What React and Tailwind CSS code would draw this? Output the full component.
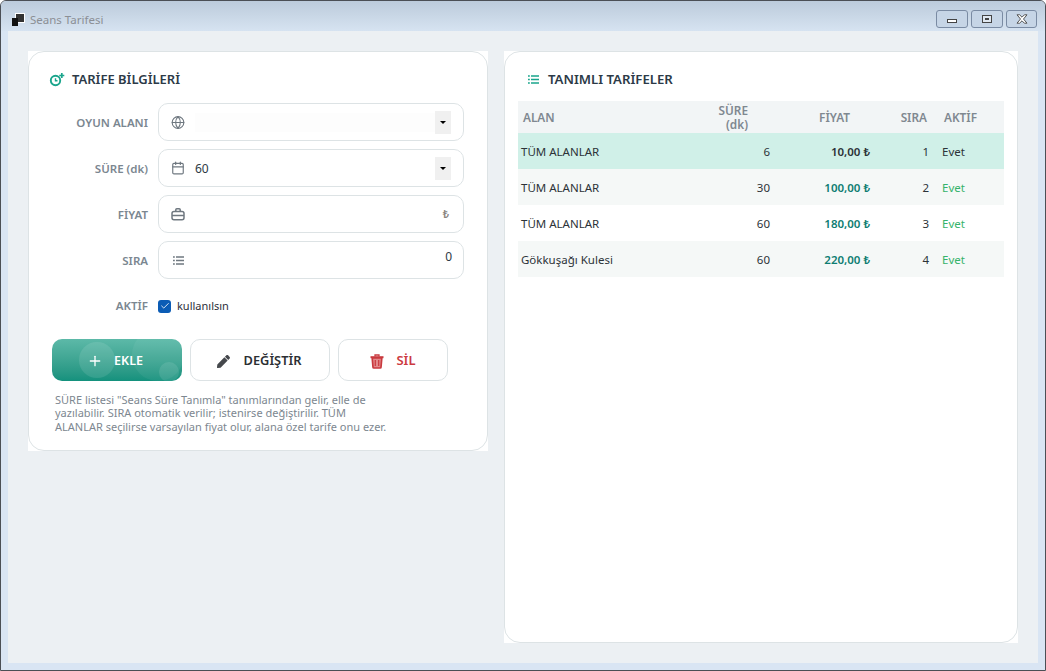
import { Calendar, Check, Globe, Plus } from 'lucide-react';
import { FaPen } from 'react-icons/fa';

const rows = [
  { area: 'TÜM ALANLAR', mins: '6', price: '10,00 ₺', order: '1', selected: true },
  { area: 'TÜM ALANLAR', mins: '30', price: '100,00 ₺', order: '2', alt: true },
  { area: 'TÜM ALANLAR', mins: '60', price: '180,00 ₺', order: '3' },
  { area: 'Gökkuşağı Kulesi', mins: '60', price: '220,00 ₺', order: '4', alt: true },
];

function ComboArrow() {
  return (
    <span className="flex h-[23px] w-4 shrink-0 items-center justify-center bg-[#f0f0f0]">
      <span className="h-0 w-0 border-x-[3px] border-t-[3px] border-x-transparent border-t-black" />
    </span>
  );
}

function Field({ label, icon, children }) {
  return (
    <div className="flex h-[38px] items-center">
      <span className="mt-[1px] w-[109px] text-right text-[11.5px] font-semibold text-[#7b8791]">{label}</span>
      <div className="ml-[10px] flex h-[38px] w-[306px] items-center rounded-[10px] border border-[#dde3e5] bg-white pl-[12px] pr-3 text-[12px] text-[#2d3a45]">
        <span className="flex w-[14px] shrink-0 justify-center text-[#6f7880]">{icon}</span>
        {children}
      </div>
    </div>
  );
}

function CaseIcon() {
  return (
    <svg width="14" height="14" viewBox="0 0 14 14" fill="none" stroke="currentColor" strokeWidth="1.5">
      <rect x="1" y="4.4" width="12" height="8.3" rx="2" />
      <path d="M1 8.4h12" />
      <path d="M4.8 4V2.8c0-.6.4-1 1-1h2.400c.6 0 1 .4 1 1V4" />
    </svg>
  );
}

function TimerPlusIcon() {
  return (
    <svg width="16" height="15" viewBox="0 0 16 15" fill="none" stroke="#1aa58c" strokeWidth="1.9">
      <circle cx="6.5" cy="8.5" r="4.7" />
      <path d="M6.5 6.200v2.500h2" strokeWidth="1.4" />
      <path d="M12.800 1v5M10.300 3.500h5" strokeWidth="1.700" />
    </svg>
  );
}

function RowsIcon({ className }) {
  return (
    <svg width="11" height="9" viewBox="0 0 11 9" fill="none" stroke="currentColor" strokeWidth="1.500" className={className}>
      <path d="M0 1h1.800M3 1h8M0 4.500h1.800M3 4.500h8M0 8h1.800M3 8h8" />
    </svg>
  );
}

function TrashIcon() {
  return (
    <svg width="14" height="15" viewBox="0 0 14 15" fill="none" stroke="#c93a3f" strokeWidth="1.700">
      <path d="M0.500 3.200h13" strokeWidth="2" />
      <path d="M5 2.500V1h4v1.500" strokeWidth="1.300" />
      <path d="M2.200 4l.8 9.200c0 .5.400.8.900.8h6.200c.5 0 .9-.3.900-.8l.8-9.200z" fill="#e38a8c" />
      <path d="M5.300 6v6M8.700 6v6" strokeWidth="1.200" />
    </svg>
  );
}

export default function App() {
  return (
    <div className="flex h-[671px] w-[1046px] flex-col overflow-hidden rounded-t-[6px] border border-[#4b4f55] bg-[#d9e5f3] font-['Noto_Sans',sans-serif]">
      <div className="flex h-[30px] shrink-0 items-start justify-between bg-gradient-to-b from-[#bccbdb] to-[#d6e3f1] pl-[11px] pr-[8px]">
        <div className="flex items-center pt-[11px]">
          <span className="relative mr-[6px] h-3 w-3">
            <span className="absolute right-0 top-0 h-2 w-2 bg-[#333] outline outline-1 outline-white" />
            <span className="absolute bottom-0 left-0 h-2 w-[6px] bg-[#111]" />
          </span>
          <span className="text-[11.5px] leading-[15px] text-[#8b8f95]">Seans Tarifesi</span>
        </div>
        <div className="flex gap-[3px] pt-[9px]">
          <div className="flex h-[18px] w-[32px] items-center justify-center rounded-[3px] border border-[#7a8ba3] bg-[#c6d5e6]">
            <span className="mt-[3px] h-[4px] w-[10px] border border-[#444] bg-white" />
          </div>
          <div className="flex h-[18px] w-[32px] items-center justify-center rounded-[3px] border border-[#7a8ba3] bg-[#c6d5e6]">
            <span className="flex h-[8px] w-[10px] items-center justify-center border border-[#444] bg-[#dfe7f0]">
              <span className="h-[2px] w-[4px] border border-[#444]" />
            </span>
          </div>
          <div className="flex h-[18px] w-[31px] items-center justify-center rounded-[3px] border border-[#7a8ba3] bg-[#c6d5e6]">
            <svg width="12" height="10" viewBox="0 0 12 10" fill="#fff" stroke="#444" strokeWidth="0.9">
              <path d="M1 .8h2.600L6 3.200 8.400.8H11L7.500 5 11 9.200H8.400L6 6.800 3.600 9.200H1L4.500 5z" />
            </svg>
          </div>
        </div>
      </div>

      <div className="mx-[7px] mb-[7px] flex flex-1 items-start gap-4 bg-[#ecf0f3] pl-5 pr-5 pt-5">
        <div className="h-[400px] w-[460px] shrink-0 bg-white">
          <div className="h-full rounded-[16px] border border-[#dde3e5] px-[23px] pt-[17px]">
            <div className="flex h-[20px] items-center gap-[7px] text-[13px] font-semibold text-[#2c3a47]">
              <span className="-ml-[3px]">
                <TimerPlusIcon />
              </span>
              <span className="leading-[20px]">TARİFE BİLGİLERİ</span>
            </div>

            <div className="mt-[14px] -ml-[13px] flex flex-col gap-2">
              <Field label="OYUN ALANI" icon={<Globe size={15} strokeWidth={1.9} />}>
                <span className="ml-[10px] h-[19px] flex-1 bg-[#fdfdfd]" />
                <ComboArrow />
              </Field>
              <Field label="SÜRE (dk)" icon={<Calendar size={14} strokeWidth={2} />}>
                <span className="ml-[10px] mt-[1px] flex-1">60</span>
                <ComboArrow />
              </Field>
              <Field label="FİYAT" icon={<CaseIcon />}>
                <span className="flex-1" />
                <span className="mr-[2px] text-[11px] font-semibold text-[#8a8580]">₺</span>
              </Field>
              <Field label="SIRA" icon={<RowsIcon />}>
                <span className="-mt-[6px] -mr-[1px] flex-1 text-right">0</span>
              </Field>
              <div className="mt-[9px] flex h-[20px] items-center">
                <span className="w-[109px] text-right text-[11.5px] font-semibold text-[#7b8791]">AKTİF</span>
                <span className="ml-[10px] flex h-[13px] w-[13px] items-center justify-center rounded-[3px] bg-[#0b5cb5]">
                  <Check size={10} strokeWidth={2} className="text-white" />
                </span>
                <span className="ml-[6px] text-[11px] text-[#2d2f3a]">kullanılsın</span>
              </div>
            </div>

            <div className="mt-[23px] flex gap-2">
              <button className="relative flex h-[42px] w-[130px] items-center justify-center gap-[11px] overflow-hidden rounded-[10px] bg-gradient-to-b from-[#5cb9a8] to-[#13917d] pr-[4px] pt-[2px] text-[12.5px] font-semibold text-white">
                <span className="absolute left-[27px] top-[3px] h-[36px] w-[36px] rounded-full bg-white/10" />
                <span className="absolute left-[80px] top-[-10px] h-[52px] w-[52px] rounded-full bg-white/5" />
                <span className="absolute left-[107px] top-[23px] h-[20px] w-[20px] rounded-full bg-white/10" />
                <Plus size={16} strokeWidth={2} className="relative" />
                <span className="relative">EKLE</span>
              </button>
              <button className="flex h-[42px] w-[140px] items-center justify-center gap-[14px] rounded-[10px] border border-[#dde3e5] bg-white pr-[2px] pt-[2px] text-[12.8px] font-semibold text-[#2c2f33]">
                <FaPen size={13} className="text-[#45484c]" />
                <span>DEĞİŞTİR</span>
              </button>
              <button className="flex h-[42px] w-[110px] items-center justify-center gap-[12px] rounded-[10px] border border-[#dde3e5] bg-white pt-[2px] text-[13px] font-semibold text-[#cc3a3f]">
                <TrashIcon />
                <span>SİL</span>
              </button>
            </div>

            <p className="mt-[12px] ml-[3px] w-[340px] text-[11px] leading-[13.3px] text-[#7d8790]">
              SÜRE listesi "Seans Süre Tanımla" tanımlarından gelir, elle de yazılabilir. SIRA otomatik verilir; istenirse değiştirilir. TÜM ALANLAR seçilirse varsayılan fiyat olur, alana özel tarife onu ezer.
            </p>
          </div>
        </div>

        <div className="h-[592px] w-[514px] shrink-0 bg-white">
          <div className="h-full rounded-[16px] border border-[#dde3e5] px-[13px] pt-[17px]">
            <div className="flex h-[20px] items-center gap-[9px] pl-[10px] text-[13.2px] font-semibold text-[#2c3a47]">
              <RowsIcon className="text-[#1aa58c]" />
              <span className="leading-[20px]">TANIMLI TARİFELER</span>
            </div>

            <div className="mt-[12px] w-[486px] text-[11.5px] text-[#2c3338]">
              <div className="flex h-[32px] items-center bg-[#f2f5f6] text-[11.8px] font-semibold leading-[14px] text-[#7f8890]">
                <span className="w-[180px] pl-[5px]">ALAN</span>
                <span className="w-[50px] text-right">SÜRE<br />(dk)</span>
                <span className="w-[102px] text-right">FİYAT</span>
                <span className="w-[77px] text-right">SIRA</span>
                <span className="ml-[17px]">AKTİF</span>
              </div>
              {rows.map((row) => (
                <div
                  key={row.order}
                  className={`flex h-[36px] items-center pt-[2px] ${row.selected ? 'bg-[#d0f0e8]' : row.alt ? 'bg-[#f5f8f7]' : 'bg-white'}`}
                >
                  <span className="w-[180px] pl-[3px]">{row.area}</span>
                  <span className="w-[72px] text-right">{row.mins}</span>
                  <span className={`w-[100px] text-right font-semibold ${row.selected ? 'text-[#2c3338]' : 'text-[#0e7d72]'}`}>{row.price}</span>
                  <span className="w-[59px] text-right">{row.order}</span>
                  <span className={`ml-[13px] ${row.selected ? 'text-[#2c3338]' : 'text-[#36b36b]'}`}>Evet</span>
                </div>
              ))}
            </div>
          </div>
        </div>
      </div>
    </div>
  );
}
